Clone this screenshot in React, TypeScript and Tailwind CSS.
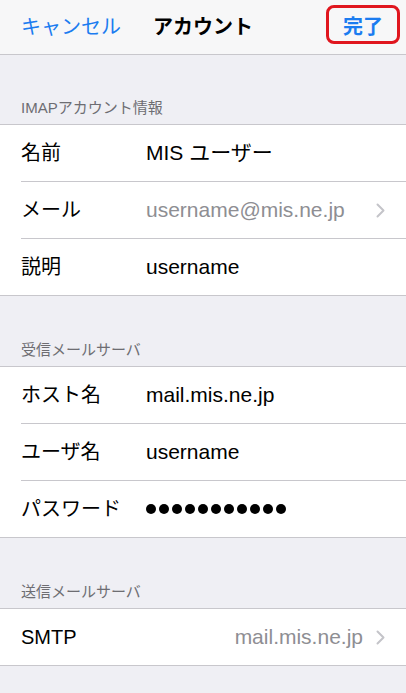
import React from 'react'

const font = { fontFamily: '"Liberation Sans", "Noto Sans CJK JP", sans-serif' }

function Chevron() {
  return (
    <svg width="9" height="15" viewBox="0 0 9 15" className="shrink-0">
      <polyline points="1.5,1.5 7.5,7.5 1.5,13.5" fill="none" stroke="#c4c4c9" strokeWidth="2" strokeLinecap="round" strokeLinejoin="round" />
    </svg>
  )
}

function Dots({ count }: { count: number }) {
  return (
    <div className="flex items-center gap-[3px]" aria-label="パスワード">
      {Array.from({ length: count }).map((_, i) => (
        <span key={i} className="block w-[10px] h-[10px] rounded-full bg-black" />
      ))}
    </div>
  )
}

type Row = { label: string; value: React.ReactNode; muted?: boolean; chevron?: boolean; right?: boolean }

function Section({ title, rows, first }: { title: string; rows: Row[]; first?: boolean }) {
  return (
    <div>
      <div className={`${first ? 'h-[69px]' : 'h-[70px]'} flex items-end px-[21px] pb-[7px] text-[15px] leading-[18px] text-[#6d6d72]`}>
        {title}
      </div>
      <div className="bg-white border-y border-[#c8c7cc]">
        {rows.map((r, i) => (
          <div key={r.label} className={i > 0 ? 'ml-[21px] border-t border-[#c8c7cc]' : 'ml-[21px]'}>
            <div className="h-[56px] flex items-center pr-[21px] text-[21px]">
              <div className="w-[125px] shrink-0 text-[20px] text-black">{r.label}</div>
              <div className={`flex-1 ${r.right ? 'text-right' : ''} ${r.muted ? 'text-[#8e8e93]' : 'text-black'}`}>
                {r.value}
              </div>
              {r.chevron && <div className="ml-[13px]"><Chevron /></div>}
            </div>
          </div>
        ))}
      </div>
    </div>
  )
}

export default function App() {
  return (
    <div className="w-[406px] h-[693px] overflow-hidden bg-[#efeff4]" style={font}>
      {/* Nav bar */}
      <div className="relative h-[55px] bg-[#f7f7f8] border-b border-[#c8c7cc] flex items-center px-[21px]">
        <span className="text-[20px] text-[#1b7cf0]">キャンセル</span>
        <span className="ml-[32px] text-[20px] font-bold text-black">アカウント</span>
        <span className="ml-auto mr-[2px] text-[20px] font-bold text-[#1b7cf0]">完了</span>
        <div className="absolute left-[326px] top-[5px] w-[74px] h-[39px] border-[3px] border-[#e0161e] rounded-[8px]" />
      </div>

      <Section
        first
        title="IMAPアカウント情報"
        rows={[
          { label: '名前', value: 'MIS ユーザー' },
          { label: 'メール', value: 'username@mis.ne.jp', muted: true, chevron: true },
          { label: '説明', value: 'username' },
        ]}
      />

      <Section
        title="受信メールサーバ"
        rows={[
          { label: 'ホスト名', value: 'mail.mis.ne.jp' },
          { label: 'ユーザ名', value: 'username' },
          { label: 'パスワード', value: <Dots count={11} /> },
        ]}
      />

      <Section
        title="送信メールサーバ"
        rows={[{ label: 'SMTP', value: 'mail.mis.ne.jp', muted: true, chevron: true, right: true }]}
      />
    </div>
  )
}
